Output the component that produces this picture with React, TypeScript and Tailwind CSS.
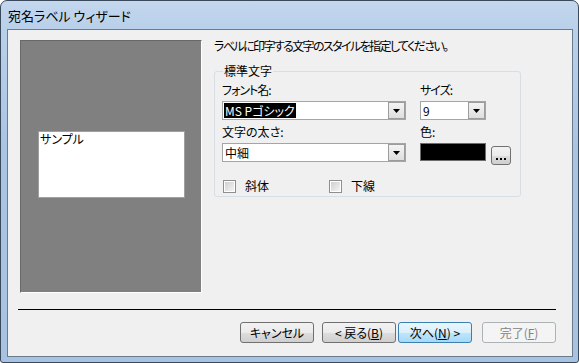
const FONT = "font-['Noto_Sans_CJK_JP','Noto_Sans',sans-serif] [font-feature-settings:'palt']";

function Combo({ value, width, selected }: { value: string; width: string; selected?: boolean }) {
  return (
    <div className={`${width} h-[19px] flex border border-[#a5a5a5] bg-white`}>
      <div className="flex-1 flex items-center pl-[1px] overflow-hidden">
        <span className={`leading-[15px] px-[1px] whitespace-pre ${selected ? 'bg-black text-white' : 'text-black'}`}>{value}</span>
      </div>
      <div className="w-[17px] flex items-center justify-center border border-[#9c9c9c] bg-[linear-gradient(to_bottom,#f4f4f4,#dedede)]">
        <svg width="7" height="4" viewBox="0 0 7 4">
          <path d="M0 0h7L3.5 4z" fill="#000" />
        </svg>
      </div>
    </div>
  );
}

function Check({ label }: { label: string }) {
  return (
    <div className="flex items-center gap-[9px]">
      <div className="w-[13px] h-[13px] border border-[#8e8f8f] bg-white p-[1px]">
        <div className="w-full h-full bg-[linear-gradient(135deg,#d0d0d0,#f4f4f4)]" />
      </div>
      <span className="leading-[14px]">{label}</span>
    </div>
  );
}

function WizButton({ children, variant }: { children: React.ReactNode; variant?: 'default' | 'disabled' }) {
  const style =
    variant === 'default'
      ? 'border-[#3c7fb1] bg-[linear-gradient(to_bottom,#eaf6fd_0%,#d9f0fc_50%,#bee6fd_51%,#a7d9f5_100%)] text-black'
      : variant === 'disabled'
        ? 'border-[#adb2b5] bg-[#f4f4f4] text-[#838383]'
        : 'border-[#707070] bg-[linear-gradient(to_bottom,#f2f2f2_0%,#ebebeb_50%,#dddddd_51%,#cfcfcf_100%)] text-black';
  return (
    <div className={`w-[74px] h-[21px] rounded-[3px] border flex items-center justify-center leading-[14px] ${style}`}>
      {children}
    </div>
  );
}

export default function App() {
  return (
    <div className={`${FONT} text-[12px] w-[579px] h-[363px] overflow-hidden`}>
      {/* window frame */}
      <div className="w-[579px] h-[363px] rounded-t-[7px] rounded-b-[3px] border border-[#3a4a5c] bg-[linear-gradient(to_bottom,#c3d7ed_0%,#b9d0ea_8%,#aac5e3_40%,#a8c3e1_100%)] pl-[6px] pr-[5px] pb-[5px] flex flex-col">
        <div className="h-[28px] flex items-center pl-[1px] pt-[1px] text-[13px] text-black">宛名ラベル ウィザード</div>

        {/* client area */}
        <div className="flex-1 border border-[#6b7b8c] bg-[#f0f0f0] flex flex-col">
          <div className="flex pt-[10px] pl-[12px]">
            {/* preview */}
            <div className="w-[182px] h-[253px] border-t border-l border-[#696969] border-r border-b border-r-white border-b-white bg-[#808080] pt-[90px] pl-[17px]">
              <div className="w-[147px] h-[67px] border border-[#a0a0a0] bg-white pl-[1px] leading-[14px] text-black">サンプル</div>
            </div>

            {/* settings */}
            <div className="ml-[12px] flex flex-col text-black">
              <div className="leading-[12px] h-[12px] whitespace-nowrap tracking-[-1.6px]">ラベルに印字する文字のスタイルを指定してください。</div>

              <div className="relative mt-[19px] w-[307px] h-[126px] rounded-[3px] border border-[#d5dfe5] pt-[10px] pl-[7px]">
                <span className="absolute left-[8px] top-[-7px] bg-[#f0f0f0] px-[1px] leading-[12px]">標準文字</span>

                <div className="flex gap-[14px]">
                  <div className="flex flex-col">
                    <div className="h-[16px] leading-[16px] tracking-[-1px]">フォント名:</div>
                    <div className="mt-[3px]">
                      <Combo value="MS Pゴシック" width="w-[184px]" selected />
                    </div>
                    <div className="mt-[4px] h-[16px] leading-[16px]">文字の太さ:</div>
                    <div className="mt-[3px]">
                      <Combo value="中細" width="w-[184px]" />
                    </div>
                  </div>
                  <div className="flex flex-col">
                    <div className="h-[16px] leading-[16px] tracking-[-1px]">サイズ:</div>
                    <div className="mt-[3px]">
                      <Combo value="9" width="w-[66px]" />
                    </div>
                    <div className="mt-[4px] h-[16px] leading-[16px]">色:</div>
                    <div className="mt-[3px] flex items-start">
                      <div className="w-[66px] h-[18px] border border-[#6d6d6d] bg-black" />
                      <div className="ml-[5px] mt-[3px] w-[20px] h-[19px] rounded-[3px] border border-[#707070] bg-[linear-gradient(to_bottom,#f2f2f2_0%,#ebebeb_50%,#dddddd_51%,#cfcfcf_100%)] flex items-end justify-center pb-[4px]">
                        <svg width="10" height="2" viewBox="0 0 10 2">
                          <rect x="0" y="0" width="2" height="2" fill="#000" />
                          <rect x="4" y="0" width="2" height="2" fill="#000" />
                          <rect x="8" y="0" width="2" height="2" fill="#000" />
                        </svg>
                      </div>
                    </div>
                  </div>
                </div>

                <div className="mt-[14px] pl-[1px] flex">
                  <div className="w-[106px]">
                    <Check label="斜体" />
                  </div>
                  <Check label="下線" />
                </div>
              </div>
            </div>
          </div>

          {/* separator */}
          <div className="mt-[16px] ml-[10px] w-[538px] h-[1px] bg-black" />

          {/* buttons */}
          <div className="mt-[12px] pr-[16px] flex justify-end">
            <WizButton>キャンセル</WizButton>
            <div className="ml-[8px]">
              <WizButton>&lt; 戻る(<span className="underline">B</span>)</WizButton>
            </div>
            <div className="ml-[2px]">
              <WizButton variant="default">次へ(<span className="underline">N</span>) &gt;</WizButton>
            </div>
            <div className="ml-[10px]">
              <WizButton variant="disabled">完了(<span className="underline">F</span>)</WizButton>
            </div>
          </div>
        </div>
      </div>
    </div>
  );
}
